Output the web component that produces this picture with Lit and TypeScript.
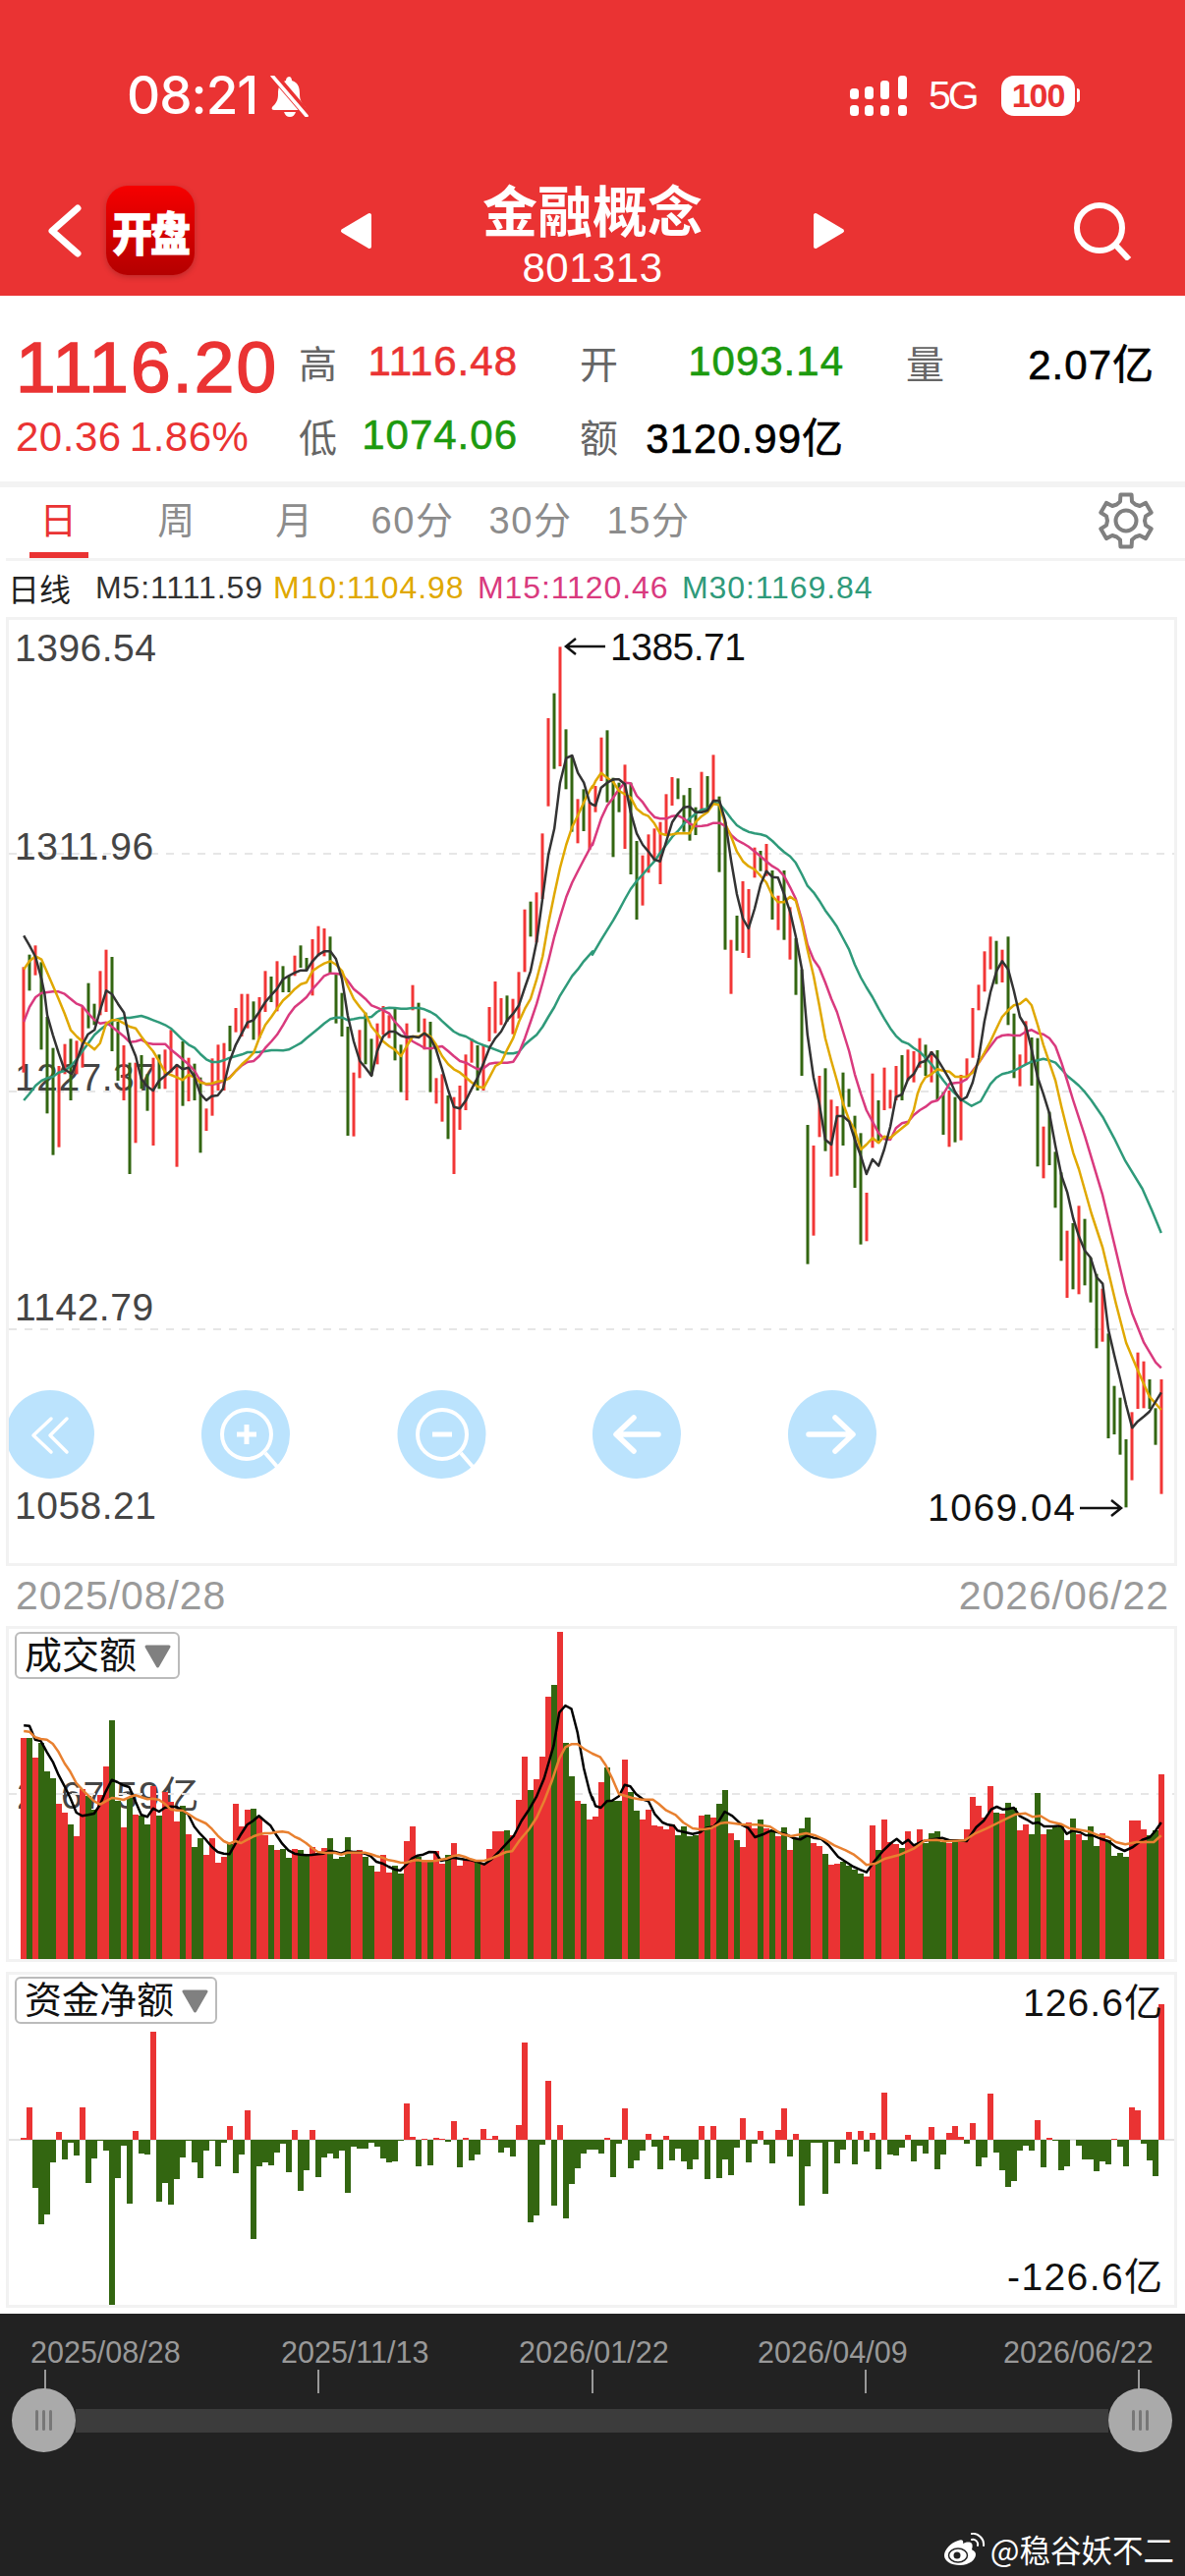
import { LitElement, html, css, svg } from "lit";
import { customElement } from "lit/decorators.js";

const CANDLES = "r1093-1415 g1055-1165 r1027-1118 g1078-1345 g1245-1540 g1340-1667 r1395-1643 r1328-1420 g1312-1500 r1318-1420 r1215-1400 g1142-1280 g1205-1270 r1105-1240 r1040-1230 g1062-1350 g1260-1440 r1332-1500 g1385-1725 r1385-1630 g1362-1465 g1420-1532 r1370-1638 g1360-1465 r1345-1465 r1285-1415 r1390-1703 g1320-1517 r1370-1503 g1388-1500 g1430-1660 r1525-1593 r1372-1547 r1330-1470 r1325-1470 g1272-1350 r1218-1292 r1175-1305 r1175-1280 g1198-1315 r1185-1310 r1105-1230 g1122-1200 r1075-1228 g1090-1170 g1122-1170 r1058-1120 g1027-1095 g1065-1105 r1008-1180 r968-1060 r975-1060 g1000-1110 g1110-1265 g1172-1305 g1275-1608 r1415-1610 r1285-1432 g1232-1390 g1312-1425 r1265-1390 r1212-1300 r1240-1310 g1215-1378 g1330-1475 r1265-1500 r1148-1225 g1202-1292 r1250-1345 g1260-1475 r1432-1510 r1420-1565 g1485-1618 r1490-1725 r1455-1590 r1360-1530 r1312-1385 g1332-1470 r1330-1470 r1215-1320 r1137-1295 r1188-1270 g1180-1260 r1190-1298 r1108-1250 r917-1108 g893-1000 r865-1018 r685-885 r333-602 g257-488 r115-480 g367-550 g450-680 r580-715 g550-678 r590-735 r540-620 r392-525 g370-590 g515-757 g530-620 r475-732 g530-810 g708-948 r752-905 r688-805 r670-770 r650-840 r565-690 r513-600 g517-580 g568-680 g546-707 g605-690 r497-618 g510-620 r445-590 g572-803 g650-1040 r1010-1175 g936-1043 r831-1050 r855-1065 r728-820 g738-800 r717-815 g798-948 r875-980 g798-1010 r910-1070 g1005-1178 g1100-1425 g1575-2000 r1638-1913 r1425-1612 g1402-1655 r1498-1733 r1518-1730 g1415-1638 g1465-1520 g1547-1767 g1600-1940 r1782-1930 r1418-1645 g1500-1630 r1400-1530 r1468-1525 r1395-1500 g1362-1500 r1345-1440 r1350-1445 r1310-1400 g1330-1425 r1350-1445 g1347-1500 g1475-1605 r1470-1642 g1490-1628 r1422-1622 r1372-1430 r1218-1370 r1147-1225 r1045-1168 r1000-1100 g1013-1145 r1040-1140 g1000-1270 g1235-1432 r1360-1457 r1258-1390 g1308-1455 g1310-1702 r1580-1738 g1535-1698 g1657-1828 g1720-1990 r1898-2103 g1875-2077 r1822-2092 g1862-2065 g1980-2117 g2030-2257 r2075-2237 g2212-2532 g2372-2520 g2408-2582 g2535-2743 r2452-2660 r2270-2442 r2297-2440 g2352-2442 g2440-2552 r2352-2702";

const VOLUME = "r447 g446 r506 g462 g549 g570 r648 r675 g710 r747 r603 g625 g665 r621 r535 g393 g640 r720 g630 r680 g683 g710 r595 g684 r612 r642 r702 g655 r742 g780 g754 r804 r753 r828 r810 g770 r647 r718 r665 g662 r690 r745 g775 r789 g785 g812 r787 g790 g805 r781 r798 r782 g753 g817 g811 g751 r795 r790 g810 g838 r855 r804 r857 g837 g860 r762 r716 g810 r825 g820 r791 r830 g803 r769 r836 r818 r818 g825 r830 r785 r731 r731 g730 r745 r637 r503 g606 r574 r503 r322 g284 r124 g462 g564 r639 g649 r696 r687 r582 g537 g638 g638 r512 g612 g669 r696 r667 r715 r716 r725 r712 g743 g718 g748 g745 r684 g681 r689 g648 g607 r739 g759 r781 r706 r723 g696 r722 g728 r748 g720 r789 g754 g722 g690 r769 r776 g800 r833 r831 g825 g838 g848 g860 r870 r715 g790 r697 r766 r770 g783 r732 r770 r727 g767 g738 g733 g765 r768 g760 r760 r726 r627 r655 r690 r594 g675 r677 g645 g660 r729 r711 g742 g616 r742 g727 g720 g712 r760 g694 r742 g758 g718 g776 r738 g760 g806 g799 g811 r700 r700 r727 g745 g730 r559";

const FLOW = [5,98,-147,-259,-230,-69,23,-61,-9,-48,98,-133,-57,-5,-34,-505,-117,-18,-197,26,-42,-45,328,-190,-134,-198,-121,-56,-4,-71,-117,-33,-5,-81,-9,41,-104,-47,88,-303,-81,-70,-79,-41,-14,-99,29,-156,-95,29,-115,-56,-43,-59,-34,-164,-23,-27,-28,-10,-21,-57,-69,-68,-4,109,8,-82,2,-78,5,2,-6,56,-84,5,-63,-46,31,3,11,-39,-26,-51,43,296,-252,-232,-15,178,-203,45,-242,-135,-89,-44,-31,-31,-42,5,-114,-12,95,-89,-64,-34,16,-23,-92,10,-64,-27,-66,-92,-60,41,-120,41,-118,-61,-108,-25,64,-71,-13,25,-16,-74,29,94,-51,17,-202,-83,-11,-11,-167,-8,-73,-30,22,-77,26,-38,19,-90,143,-47,-48,-26,15,-67,-19,-44,39,-92,-45,19,41,8,-12,50,-82,-54,140,-39,-93,-144,-127,-35,-19,-33,59,-84,5,-3,-93,-82,0,-19,-60,-62,-98,-67,-76,2,-23,-82,98,88,-12,-64,-112,413];

const BLACK_A = "63,997 78,1027 94,1062 110,1130 118,1175 125,1240 140,1300 155,1355 170,1405 190,1420 200,1390 218,1330 233,1298 250,1285 265,1225 281,1165 296,1175 312,1205 328,1232 343,1320 359,1365 374,1435 390,1458 405,1470 421,1440 437,1425 452,1410 468,1392 483,1405 499,1400 515,1430 530,1480 546,1500 560,1487 576,1485 590,1465 608,1380 624,1330 640,1295 655,1262 671,1255 686,1230 702,1200 718,1178 733,1160 749,1130 764,1120 780,1110 796,1103 811,1103 827,1075 843,1055 858,1045 874,1045 889,1068 905,1130 920,1240 936,1320 952,1380 967,1400 983,1425 998,1350 1014,1305 1030,1290 1045,1290 1061,1303 1076,1307 1092,1305 1108,1308 1123,1295 1139,1310 1154,1345 1170,1405 1186,1470 1201,1520 1217,1525 1233,1500 1248,1465 1264,1430 1280,1385 1295,1340 1311,1310 1326,1290 1342,1255 1358,1235 1373,1210 1389,1155 1404,1105 1420,1015 1436,880 1451,750 1467,670 1482,530 1498,455 1514,447 1529,500 1545,530 1560,590 1568,597";
const BLACK_B = "0,597 8,600 23,545 39,530 55,520 70,520 86,535 101,620 117,685 133,720 148,740 164,765 179,770 195,710 211,650 226,625 242,605 257,603 273,620 289,620 304,615 320,585 336,585 351,645 367,770 382,870 398,945 413,975 429,915 445,840 460,800 476,818 491,820 507,870 523,925 538,1000 554,1100 569,1300 585,1430 600,1510 616,1620 632,1635 647,1548 663,1548 679,1565 694,1620 710,1670 725,1725 741,1680 757,1700 772,1650 788,1580 803,1490 819,1482 835,1435 850,1420 866,1385 881,1380 897,1353 913,1375 929,1405 944,1435 960,1475 975,1500 990,1490 1006,1445 1022,1370 1037,1260 1053,1170 1069,1105 1084,1075 1100,1100 1115,1165 1131,1245 1147,1275 1162,1345 1178,1430 1193,1480 1209,1540 1225,1640 1241,1730 1256,1780 1272,1860 1287,1915 1303,1960 1318,1980 1334,2040 1350,2060 1365,2200 1381,2280 1396,2350 1412,2430 1428,2500 1443,2480 1459,2465 1474,2450 1490,2420 1505,2392";
const YELLOW_A = "63,1100 78,1075 94,1060 110,1070 125,1110 140,1150 155,1190 171,1235 187,1285 203,1305 218,1320 234,1330 250,1345 265,1325 281,1265 296,1255 312,1255 328,1265 343,1275 359,1280 374,1305 390,1330 405,1350 421,1380 437,1415 452,1422 468,1430 483,1438 499,1422 515,1430 530,1445 546,1450 561,1448 577,1442 592,1440 608,1432 624,1410 640,1390 655,1375 671,1355 686,1310 702,1270 718,1245 733,1220 749,1195 764,1180 780,1160 796,1145 811,1140 827,1105 843,1092 858,1082 874,1075 889,1085 905,1105 920,1150 936,1190 952,1215 967,1235 983,1275 998,1295 1014,1320 1030,1335 1045,1345 1061,1365 1076,1335 1092,1305 1108,1305 1123,1295 1139,1305 1154,1330 1170,1365 1186,1390 1201,1405 1217,1415 1233,1430 1248,1445 1264,1458 1280,1462 1295,1430 1311,1395 1326,1385 1342,1345 1358,1310 1373,1260 1389,1220 1404,1190 1420,1130 1436,1060 1451,960 1467,870 1482,790 1498,720 1514,665 1529,630 1545,590 1560,555 1568,540";
const YELLOW_B = "0,545 8,525 23,500 39,515 55,528 70,555 86,565 101,575 117,610 133,625 148,632 164,655 179,685 195,690 211,688 226,685 242,685 257,685 273,650 289,632 304,620 320,595 336,598 351,655 367,695 382,740 398,770 413,785 429,795 445,815 460,835 476,875 491,895 507,895 523,878 538,890 554,960 569,1040 585,1120 600,1210 616,1310 632,1380 647,1440 663,1510 679,1560 694,1590 710,1650 725,1635 741,1615 757,1630 772,1610 788,1615 803,1600 819,1585 835,1570 850,1530 860,1480 870,1450 881,1430 897,1420 913,1405 929,1410 944,1412 960,1428 975,1428 990,1428 1006,1415 1022,1385 1037,1355 1053,1320 1069,1280 1084,1245 1100,1225 1115,1210 1131,1205 1147,1190 1162,1210 1178,1270 1193,1330 1209,1385 1225,1440 1241,1520 1256,1590 1272,1660 1287,1710 1320,1845 1350,1950 1385,2120 1412,2240 1443,2325 1474,2405 1505,2445";
const PINK_A = "63,1260 78,1215 94,1185 110,1172 125,1170 140,1168 155,1168 171,1175 187,1190 203,1205 218,1212 234,1235 250,1255 265,1265 281,1262 296,1275 312,1290 328,1305 343,1322 359,1320 374,1315 390,1325 405,1328 421,1328 437,1328 452,1345 468,1360 483,1375 499,1390 515,1410 530,1440 546,1452 561,1452 577,1448 592,1440 608,1430 624,1410 640,1393 655,1383 671,1380 686,1365 702,1340 718,1320 733,1300 749,1270 764,1240 780,1215 796,1200 811,1185 827,1160 843,1140 858,1120 874,1112 889,1113 905,1115 920,1135 936,1160 952,1175 967,1190 983,1210 998,1217 1014,1225 1030,1235 1045,1260 1061,1280 1076,1305 1092,1320 1108,1330 1123,1340 1139,1342 1154,1338 1170,1335 1186,1350 1201,1365 1217,1380 1233,1385 1248,1395 1264,1405 1280,1402 1295,1388 1311,1385 1326,1385 1342,1385 1358,1382 1373,1355 1389,1310 1404,1260 1420,1205 1436,1140 1451,1075 1467,1000 1482,940 1498,880 1514,835 1529,800 1545,765 1568,715";
const PINK_B = "0,720 23,640 39,600 55,575 70,550 86,530 101,532 117,570 133,590 148,615 164,635 179,640 195,640 211,632 226,630 242,640 257,655 273,663 289,662 304,660 320,653 336,653 351,662 367,690 382,705 398,715 413,725 429,740 445,755 460,770 476,785 491,795 507,815 523,850 538,885 554,950 569,1025 585,1070 600,1095 616,1140 632,1190 647,1230 663,1290 679,1350 694,1420 710,1480 725,1530 741,1565 757,1600 772,1618 788,1620 803,1585 819,1570 835,1565 850,1545 866,1530 881,1520 897,1505 913,1500 929,1480 944,1450 960,1447 975,1445 990,1435 1006,1410 1022,1385 1037,1360 1053,1335 1069,1310 1084,1302 1100,1300 1115,1302 1131,1302 1147,1290 1162,1285 1178,1295 1193,1298 1209,1310 1225,1335 1241,1385 1256,1440 1272,1500 1303,1610 1350,1790 1381,1940 1412,2090 1428,2150 1459,2240 1490,2300 1505,2317";
const TEAL_A = "63,1500 78,1480 94,1455 110,1440 125,1432 140,1428 155,1415 171,1410 187,1395 203,1375 218,1350 234,1325 250,1300 265,1285 281,1270 296,1258 312,1252 328,1248 343,1248 359,1245 374,1242 390,1248 405,1255 421,1262 437,1270 452,1280 468,1298 483,1315 499,1330 515,1340 530,1358 546,1375 561,1383 577,1383 592,1378 608,1370 624,1365 640,1360 655,1353 671,1353 686,1352 702,1350 718,1347 733,1347 749,1348 764,1345 780,1335 796,1325 811,1310 827,1295 843,1280 858,1265 874,1252 889,1247 905,1247 920,1255 936,1252 952,1248 967,1248 983,1245 998,1230 1014,1220 1030,1217 1045,1218 1061,1220 1076,1220 1092,1218 1108,1218 1123,1222 1139,1230 1154,1240 1170,1258 1186,1275 1201,1290 1217,1300 1233,1305 1248,1315 1264,1325 1280,1332 1295,1338 1311,1345 1326,1352 1342,1357 1358,1357 1373,1352 1389,1330 1404,1315 1420,1300 1436,1275 1451,1245 1467,1215 1482,1180 1498,1150 1514,1120 1529,1100 1545,1075 1568,1045";
const TEAL_B = "0,1055 23,1010 39,980 55,950 70,920 86,885 101,855 117,830 133,810 148,790 164,770 179,745 195,720 211,695 226,678 242,655 257,640 273,625 289,612 304,610 320,590 336,595 351,615 367,640 382,660 398,672 413,680 429,685 445,688 460,693 476,708 491,725 507,742 523,755 538,775 554,810 569,845 585,865 600,890 616,920 632,945 647,970 663,1005 679,1040 694,1085 710,1125 725,1155 741,1185 757,1220 772,1250 788,1280 803,1303 819,1320 835,1327 850,1340 866,1352 881,1370 897,1390 913,1415 929,1440 944,1462 960,1480 975,1497 1003,1517 1027,1503 1053,1450 1069,1430 1084,1420 1100,1415 1115,1410 1131,1400 1147,1390 1162,1382 1178,1378 1193,1373 1209,1378 1225,1385 1241,1405 1256,1425 1272,1440 1287,1455 1303,1475 1320,1500 1350,1550 1380,1615 1410,1685 1455,1770 1480,1835 1505,1905";
const VBLACK_A = "63,409 78,410 93,452 108,456 124,490 140,520 155,560 171,595 186,630 202,675 218,685 233,682 249,678 265,650 280,610 296,575 311,582 327,592 342,597 358,640 374,682 390,688 405,662 421,672 436,660 452,656 468,658 483,668 498,680 514,718 530,740 545,758 561,780 576,795 592,800 607,802 623,770 638,740 654,712 670,700 685,685 700,700 716,715 732,745 747,770 763,790 779,800 794,803 810,805 825,804 841,802 856,800 872,792 887,795 903,800 919,792 934,795 950,795 965,800 981,808 996,825 1012,830 1028,840 1043,848 1059,852 1074,835 1090,815 1105,806 1120,803 1136,795 1152,796 1167,822 1183,818 1198,812 1214,815 1230,818 1245,820 1260,824 1281,833 1300,818 1320,795 1340,770 1360,745 1380,700 1400,665 1420,625 1440,570 1465,470 1480,370 1496,348 1512,358 1528,430 1545,540 1560,610 1568,635";
const VBLACK_B = "0,628 8,655 22,660 38,640 52,638 70,625 85,590 100,595 115,618 135,635 148,640 165,680 185,705 200,712 215,715 225,730 245,735 265,740 285,735 300,722 320,718 335,700 350,672 370,685 395,712 412,722 430,750 450,742 472,730 490,735 510,740 530,752 550,757 568,745 585,752 605,755 625,775 650,810 670,825 690,840 710,850 725,857 745,825 770,790 790,768 805,755 820,770 835,758 850,775 875,762 900,757 925,752 945,760 965,760 990,762 1015,720 1035,700 1055,665 1070,657 1085,665 1100,664 1115,660 1130,685 1150,697 1165,708 1180,705 1195,717 1220,717 1240,715 1255,740 1270,730 1290,735 1305,744 1325,745 1345,755 1365,762 1385,780 1408,792 1430,780 1455,758 1475,750 1490,730 1505,705";
const VORANGE_A = "63,426 78,428 93,445 108,450 124,452 140,465 155,490 171,525 186,550 202,585 218,605 233,622 249,640 265,650 280,640 296,630 311,632 327,636 342,628 358,622 374,628 390,634 405,632 421,636 436,648 452,665 468,668 483,668 500,680 520,695 545,708 561,725 576,745 592,762 607,770 623,762 638,768 654,758 670,748 685,742 700,738 716,738 732,734 747,733 763,736 779,748 794,756 810,768 825,782 841,795 856,797 872,798 887,798 903,803 919,797 934,797 950,797 965,797 981,802 996,808 1012,812 1028,820 1043,823 1059,827 1074,828 1090,822 1105,820 1120,823 1136,823 1152,822 1167,818 1183,815 1198,808 1214,805 1230,810 1245,817 1260,822 1281,822 1300,815 1320,805 1340,795 1355,793 1375,760 1400,725 1420,690 1440,640 1460,580 1480,510 1496,475 1512,466 1528,466 1545,480 1568,495";
const VORANGE_B = "0,495 20,505 35,530 52,570 70,618 85,623 105,630 130,635 160,635 175,648 195,668 220,682 240,705 265,723 290,727 315,722 340,707 355,705 375,708 400,712 435,712 470,718 500,740 525,747 565,738 590,745 615,758 640,775 670,790 690,802 710,820 725,835 750,830 775,815 810,805 850,785 880,760 910,758 935,763 985,760 1010,740 1040,725 1075,705 1120,680 1145,677 1165,688 1185,685 1210,702 1240,710 1260,722 1315,733 1340,745 1365,750 1385,765 1410,772 1440,765 1485,765 1505,745";

const RED = "#ea3333";
const WICK_RED = "#f23636";
const GREEN = "#336611";

/** Zoom crops use 2.6 × horizontally and 3 × vertically; map them to page pixels. */
const toPoints = (s: string, xo: number, yo: number) =>
  s.split(" ").map((p) => {
    const [x, y] = p.split(",").map(Number);
    return `${(xo + x / 2.6).toFixed(1)},${(yo + y / 3).toFixed(1)}`;
  }).join(" ");

const gearPath = (() => {
  const teeth = 6, R = 27, r = 20.5, pts: string[] = [];
  for (let i = 0; i < teeth; i++) {
    const a = (-90 + (360 / teeth) * i) * Math.PI / 180;
    const t1 = 17 * Math.PI / 180, t2 = 12 * Math.PI / 180, t3 = 30 * Math.PI / 180;
    const add = (rad: number, ang: number) =>
      pts.push(`${(30 + rad * Math.cos(ang)).toFixed(1)},${(30 + rad * Math.sin(ang)).toFixed(1)}`);
    add(r, a - t1); add(R, a - t2); add(R, a + t2); add(r, a + t1); add(r - 1.5, a + t3);
  }
  return pts.join(" ");
})();

const polyline = (pts: string, color: string, w: number) =>
  svg`<polyline points=${pts} fill="none" stroke=${color} stroke-width=${w} stroke-linejoin="round"/>`;

const candleBars = () =>
  CANDLES.split(" ").map((c, i) => {
    const [a, b] = c.slice(1).split("-").map(Number);
    const y = 620 + a / 3;
    return svg`<rect x=${22.5 + 6 * i} y=${y} width="3" height=${(b - a) / 3} fill=${c[0] === "r" ? WICK_RED : GREEN}/>`;
  });

const volumeBars = () =>
  VOLUME.split(" ").map((c, i) => {
    const y = 1620 + Number(c.slice(1)) / 3;
    return svg`<rect x=${21 + 6 * i} y=${y} width="6" height=${1994 - y} fill=${c[0] === "r" ? RED : GREEN} shape-rendering="crispEdges"/>`;
  });

const flowBars = () =>
  FLOW.map((v, i) => {
    const h = Math.abs(v) / 3;
    return svg`<rect x=${21 + 6 * i} y=${v > 0 ? 2177.5 - h : 2177.5} width="6" height=${h} fill=${v > 0 ? RED : GREEN} shape-rendering="crispEdges"/>`;
  });

const frame = (y: number, h: number) =>
  svg`<rect x="7.5" y=${y + 1.5} width="1189" height=${h - 3} fill="none" stroke="#f2f2f2" stroke-width="3"/>`;

const gridLine = (y: number) =>
  svg`<line x1="9" x2="1195" y1=${y} y2=${y} stroke="#e6e6e6" stroke-width="2" stroke-dasharray="8 8"/>`;

const dropdown = (y: number, w: number, label: string) => svg`
  <rect x="16" y=${y} width=${w} height="46" rx="5" fill="#fff" stroke="#bbb" stroke-width="2"/>
  <text class="drop" x="25" y=${y + 36}>${label}</text>
  <path d="M${w - 17} ${y + 14}h23l-11.500 20z" fill="#808080" stroke="#808080" stroke-width="3" stroke-linejoin="round"/>`;

const roundButton = (cx: number, body: unknown) => svg`
  <circle cx=${cx} cy="1460" r="45" fill="#bbe3fd"/>
  <g fill="none" stroke="#fff" stroke-linecap="round" stroke-linejoin="round">${body}</g>`;

const lens = (cx: number, inner: unknown) => svg`
  <circle cx=${cx} cy="1460" r="25" stroke-width="4"/>
  <path d=${`M${cx + 19} 1479l13 15`} stroke-width="4" stroke-linecap="butt"/>
  ${inner}`;

const priceLabels: [string, number][] = [["1396.54", 673], ["1311.96", 875], ["1227.37", 1110], ["1142.79", 1344], ["1058.21", 1546]];

@customElement("app-root")
export class AppRoot extends LitElement {
  static styles = css`
    :host { display: block; width: 1206px; height: 2622px; overflow: hidden; background: #fff;
      font-family: "Liberation Sans", "Noto Sans CJK SC", sans-serif; }
    svg { display: block; }
    .header { height: 301px; background: #ea3333; color: #fff; }
    .status { height: 189px; box-sizing: border-box; padding: 77px 0 0 129px; display: flex; align-items: flex-start; }
    .time { font: 500 53px/41px Inter, sans-serif; letter-spacing: -1px; width: 146px; white-space: nowrap; }
    .bell { margin-right: auto; }
    .fiveg { font-size: 41px; line-height: 41px; width: 52px; margin: 0 22px; letter-spacing: -3px; white-space: nowrap; }
    .battery { width: 75px; height: 41px; border-radius: 13px; background: #fff; color: #ea3333;
      font-size: 34px; line-height: 41px; font-weight: 700; text-align: center; letter-spacing: -1px; }
    .nub { width: 3px; height: 14px; margin: 13px 107px 0 2px; background: #fff; border-radius: 0 3px 3px 0; }
    .nav { height: 112px; display: flex; align-items: flex-start; padding-left: 48px; }
    .back { margin: 19px 25px 0 0; }
    .logo { width: 90px; height: 91px; border-radius: 22px; background: linear-gradient(#f60000, #b40000);
      box-shadow: 0 2px 6px rgba(0,0,0,.2); display: flex; align-items: center; justify-content: center; margin-right: 148px;
      font: 900 41px/91px "Noto Sans CJK SC", sans-serif; letter-spacing: -2px; white-space: nowrap; -webkit-text-stroke: .8px #fff; }
    .logo span { transform: scaleY(1.15); }
    .tri { margin-top: 27px; }
    .title { width: 448px; text-align: center; margin-top: -5px; }
    .title b { display: block; font: 700 56px/56px "Noto Sans CJK SC", sans-serif; }
    .title span { display: block; font-size: 42px; line-height: 44px; margin-top: 11px; letter-spacing: .5px; }
    .search { margin: 16px 0 0 233px; }
    .info { height: 189px; box-sizing: border-box; padding: 30px 0 0 16px; display: grid;
      grid-template-columns: 288px 286px 332px 253px; grid-auto-rows: 75px; align-items: center; }
    .price { font-size: 73px; color: #ea3333; line-height: 75px; margin-top: 10px; letter-spacing: 2px; -webkit-text-stroke: 1.6px #ea3333; white-space: nowrap; }
    .change { font-size: 42px; color: #ea3333; white-space: nowrap; word-spacing: -4px; letter-spacing: .5px; margin-top: 2px; }
    .stat { display: flex; justify-content: space-between; align-items: center; padding-right: 63px; white-space: nowrap; font-size: 42px; letter-spacing: 1px; margin-top: -2px; }
    .stat.last { padding-right: 0; }
    .stat .k { font-size: 39px; color: #666; font-family: "Noto Sans CJK SC", sans-serif; letter-spacing: 0; }
    .stat .red { -webkit-text-stroke: .6px #ea3333; } .stat .grn { -webkit-text-stroke: .6px #1c9a0e; } .stat .blk { -webkit-text-stroke: .6px #000; }
    .red { color: #ea3333; } .grn { color: #1c9a0e; } .blk { color: #000; }
    .rule { height: 6px; background: #f3f3f3; }
    .tabs { height: 72px; display: flex; align-items: stretch; }
    .tab { width: 120px; display: flex; justify-content: center; font: 400 38px "Liberation Sans", "Noto Sans CJK SC", sans-serif; color: #8c8c8c; white-space: nowrap; letter-spacing: 1.5px; }
    .tab span { display: flex; align-items: center; justify-content: center; min-width: 60px; box-sizing: border-box; padding-bottom: 6px; border-bottom: 6px solid transparent; }
    .tab.on span { color: #ea3333; border-bottom-color: #ea3333; }
    .gear { margin: 4px 30px 0 auto; }
    .rule2 { height: 3px; margin-left: 6px; background: #f3f3f3; }
    .legend { height: 57px; box-sizing: border-box; padding: 0 0 3px 8px; display: flex; align-items: center; font-size: 32px; letter-spacing: .9px; white-space: nowrap; }
    .legend i { font-style: normal; }
    .legend .day { color: #222; width: 89px; font-size: 32px; letter-spacing: 0; }
    .legend .m5 { color: #333; width: 181px; } .legend .m10 { color: #e0a800; width: 208px; }
    .legend .m15 { color: #d93a7e; width: 208px; } .legend .m30 { color: #2f9a7a; }
    .chart { width: 1192px; margin-left: 6px; }
    .dates { height: 61px; display: flex; justify-content: space-between; align-items: center; padding: 0 16px; font-size: 41px; letter-spacing: .9px; color: #9a9a9a; }
    .gap-a { height: 10px; } .gap-b { height: 6px; }
    text { font-family: "Liberation Sans", "Noto Sans CJK SC", sans-serif; }
    text.axis { font-size: 39px; letter-spacing: .5px; fill: #454545; }
    text.mark { font-size: 39px; fill: #111; }
    text.drop { font-size: 38px; fill: #111; font-family: "Noto Sans CJK SC", sans-serif; }
    .footer { height: 267px; background: #222; display: flex; flex-direction: column; }
    .fdates { display: grid; grid-template-columns: 255px 242px 243px 250px auto; padding: 22px 0 0 31px; font-size: 30.500px; line-height: 34px; color: #999; height: 35px; }
    .ticks { display: flex; justify-content: space-between; padding: 0 46px 0 45px; height: 24px; }
    .ticks i { width: 2px; background: #999; }
    .slider { display: flex; align-items: center; margin: -5px 13px 0 12px; position: relative; }
    .track { flex: 1; height: 24px; background: #3c3c3c; }
    .handle { width: 65px; height: 65px; border-radius: 50%; background: #aaa; display: flex; gap: 4px; align-items: center; justify-content: center; }
    .handle i { width: 3px; height: 21px; border-radius: 2px; background: #777; }
    .mark-wm { margin-top: auto; padding: 0 11px 10px 0; display: flex; justify-content: flex-end; align-items: flex-end; gap: 5px; color: #fff; }
    .mark-wm span { font: 400 31.500px/36px "Noto Sans CJK SC", sans-serif; white-space: nowrap; }
  `;

  render() {
    const cBlack = toPoints(BLACK_A, 0, 620) + " " + toPoints(BLACK_B, 603, 620);
    const cYellow = toPoints(YELLOW_A, 0, 620) + " " + toPoints(YELLOW_B, 603, 620);
    const cPink = toPoints(PINK_A, 0, 620) + " " + toPoints(PINK_B, 603, 620);
    const cTeal = toPoints(TEAL_A, 0, 620) + " " + toPoints(TEAL_B, 603, 620);
    const vBlack = toPoints(VBLACK_A, 0, 1620) + " " + toPoints(VBLACK_B, 603, 1620);
    const vOrange = toPoints(VORANGE_A, 0, 1620) + " " + toPoints(VORANGE_B, 603, 1620);

    return html`
      <div class="header">
        <div class="status">
          <div class="time">08:21</div>
          <svg class="bell" width="40" height="42" viewBox="0 0 40 42">
            <path d="M20 1c-3 0-4 2-4 4C9 7 8 13 8 19c0 6-2 9-6 13-1 2 0 3 2 3h30c2 0 3-1 2-3-4-4-6-7-6-13 0-6-1-12-8-14 0-2-1-4-3-4z" fill="#fff"/>
            <path d="M14 37c1 3 3 5 6 5s5-2 6-5z" fill="#fff"/>
            <path d="M3 -1L38 40" stroke="#ea3333" stroke-width="8"/>
            <path d="M2 0L37 41" stroke="#fff" stroke-width="3.500" stroke-linecap="round"/>
          </svg>
          <svg width="58" height="41" viewBox="0 0 58 41" fill="#fff">
            <rect x="0" y="13" width="9" height="11" rx="3.500"/><rect x="0" y="30" width="9" height="11" rx="3.500"/>
            <rect x="15" y="11" width="9" height="13" rx="3.500"/><rect x="15" y="30" width="9" height="11" rx="3.500"/>
            <rect x="31" y="5" width="9" height="19" rx="3.500"/><rect x="31" y="30" width="9" height="11" rx="3.500"/>
            <rect x="49" y="0" width="9" height="24" rx="3.500"/><rect x="49" y="30" width="9" height="11" rx="3.500"/>
          </svg>
          <div class="fiveg">5G</div>
          <div class="battery">100</div>
          <div class="nub"></div>
        </div>
        <div class="nav">
          <svg class="back" width="35" height="54" viewBox="0 0 35 54"><path d="M31 4L5 27l26 23" fill="none" stroke="#fff" stroke-width="7" stroke-linecap="round" stroke-linejoin="round"/></svg>
          <div class="logo"><span>开盘</span></div>
          <svg class="tri" width="33" height="38" viewBox="0 0 33 38"><path d="M30 3v32L3 19z" fill="#fff" stroke="#fff" stroke-width="4" stroke-linejoin="round"/></svg>
          <div class="title"><b>金融概念</b><span>801313</span></div>
          <svg class="tri" width="33" height="38" viewBox="0 0 33 38"><path d="M3 3v32l27-16z" fill="#fff" stroke="#fff" stroke-width="4" stroke-linejoin="round"/></svg>
          <svg class="search" width="60" height="60" viewBox="0 0 60 60"><circle cx="26" cy="27" r="23" fill="none" stroke="#fff" stroke-width="6"/><path d="M42 44l14 15" stroke="#fff" stroke-width="6"/></svg>
        </div>
      </div>

      <div class="info">
        <div class="price">1116.20</div>
        <div class="stat"><span class="k">高</span><span class="red">1116.48</span></div>
        <div class="stat"><span class="k">开</span><span class="grn">1093.14</span></div>
        <div class="stat last"><span class="k">量</span><span class="blk">2.07亿</span></div>
        <div class="change">20.36 1.86%</div>
        <div class="stat"><span class="k">低</span><span class="grn">1074.06</span></div>
        <div class="stat"><span class="k">额</span><span class="blk">3120.99亿</span></div>
      </div>
      <div class="rule"></div>
      <div class="tabs">
        <div class="tab on"><span>日</span></div>
        <div class="tab"><span>周</span></div>
        <div class="tab"><span>月</span></div>
        <div class="tab"><span>60分</span></div>
        <div class="tab"><span>30分</span></div>
        <div class="tab"><span>15分</span></div>
        <svg class="gear" width="60" height="60" viewBox="0 0 60 60"><polygon points=${gearPath} fill="none" stroke="#808080" stroke-width="4" stroke-linejoin="round"/><circle cx="30" cy="30" r="10.500" fill="none" stroke="#808080" stroke-width="4"/></svg>
      </div>
      <div class="rule2"></div>
      <div class="legend">
        <i class="day">日线</i><i class="m5">M5:1111.59</i><i class="m10">M10:1104.98</i><i class="m15">M15:1120.46</i><i class="m30">M30:1169.84</i>
      </div>

      <div class="chart">
        <svg width="1192" height="966" viewBox="6 628 1192 966">
          ${gridLine(869)}${gridLine(1111)}${gridLine(1353)}
          ${priceLabels.map(([t, y]) => svg`<text class="axis" x="15" y=${y}>${t}</text>`)}
          ${candleBars()}
          ${polyline(cTeal, "#2f9a7a", 2.5)}
          ${polyline(cPink, "#d93a7e", 2.5)}
          ${polyline(cYellow, "#e0a800", 2.5)}
          ${polyline(cBlack, "#333", 2.5)}
          <text class="mark" x="621" y="672" textLength="138">1385.71</text>
          <path d="M616 658H576M586 650l-10 8 10 8" fill="none" stroke="#111" stroke-width="2.500"/>
          <text class="mark" x="944" y="1548" textLength="150">1069.04</text>
          <path d="M1099 1535H1141M1131 1527l10 8-10 8" fill="none" stroke="#111" stroke-width="2.500"/>
          ${roundButton(51, svg`<path d="M52 1444l-18 17 18 17M68 1444l-17 17 17 17" stroke-width="3.500"/>`)}
          ${roundButton(250, lens(251, svg`<path d="M241 1460h20M251 1450v20" stroke-width="5" stroke-linecap="butt"/>`))}
          ${roundButton(449.500, lens(450, svg`<path d="M440 1460h20" stroke-width="5" stroke-linecap="butt"/>`))}
          ${roundButton(648, svg`<path d="M670 1460H628M645 1443l-18 17 18 17" stroke-width="5.500"/>`)}
          ${roundButton(847, svg`<path d="M823 1460h44M850 1443l18 17-18 17" stroke-width="5.500"/>`)}
          ${frame(628, 966)}
        </svg>
      </div>

      <div class="dates"><span>2025/08/28</span><span>2026/06/22</span></div>

      <div class="chart">
        <svg width="1192" height="342" viewBox="6 1655 1192 342">
          <text class="axis" x="17" y="1841" textLength="186">2167.59亿</text>
          ${gridLine(1826)}
          ${volumeBars()}
          ${polyline(vBlack, "#000", 2.500)}
          ${polyline(vOrange, "#e88030", 2.500)}
          ${dropdown(1662, 166, "成交额")}
          ${frame(1655, 342)}
        </svg>
      </div>
      <div class="gap-a"></div>
      <div class="chart">
        <svg width="1192" height="342" viewBox="6 2007 1192 342">
          <line x1="9" x2="1195" y1="2178" y2="2178" stroke="#e2e2e2" stroke-width="2"/>
          ${flowBars()}
          ${dropdown(2013, 204, "资金净额")}
          <text class="mark" x="1041" y="2052" textLength="142">126.6亿</text>
          <text class="mark" x="1025" y="2331" textLength="158">-126.6亿</text>
          ${frame(2007, 342)}
        </svg>
      </div>
      <div class="gap-b"></div>

      <div class="footer">
        <div class="fdates"><span>2025/08/28</span><span>2025/11/13</span><span>2026/01/22</span><span>2026/04/09</span><span>2026/06/22</span></div>
        <div class="ticks"><i></i><i></i><i></i><i></i><i></i></div>
        <div class="slider">
          <div class="handle"><i></i><i></i><i></i></div>
          <div class="track"></div>
          <div class="handle"><i></i><i></i><i></i></div>
        </div>
        <div class="mark-wm">
          <svg width="43" height="34" viewBox="0 0 43 34">
            <path d="M15 8C8 10 1 17 1 23c0 6 7 10 16 10 10 0 16-6 16-11 0-3-3-4-4-5 1-3 1-6-1-7-3-1-6 0-8 1 1-3-1-5-5-3z" fill="#fff"/>
            <ellipse cx="15" cy="23" rx="9.500" ry="7" fill="#fff" stroke="#222" stroke-width="1.500"/>
            <circle cx="14" cy="23" r="3.500" fill="#222"/>
            <path d="M29 1c6-1 13 5 12 12M29 7c3-1 7 2 6 6" fill="none" stroke="#fff" stroke-width="2" stroke-linecap="round"/>
          </svg>
          <span>@稳谷妖不二</span>
        </div>
      </div>
    `;
  }
}
